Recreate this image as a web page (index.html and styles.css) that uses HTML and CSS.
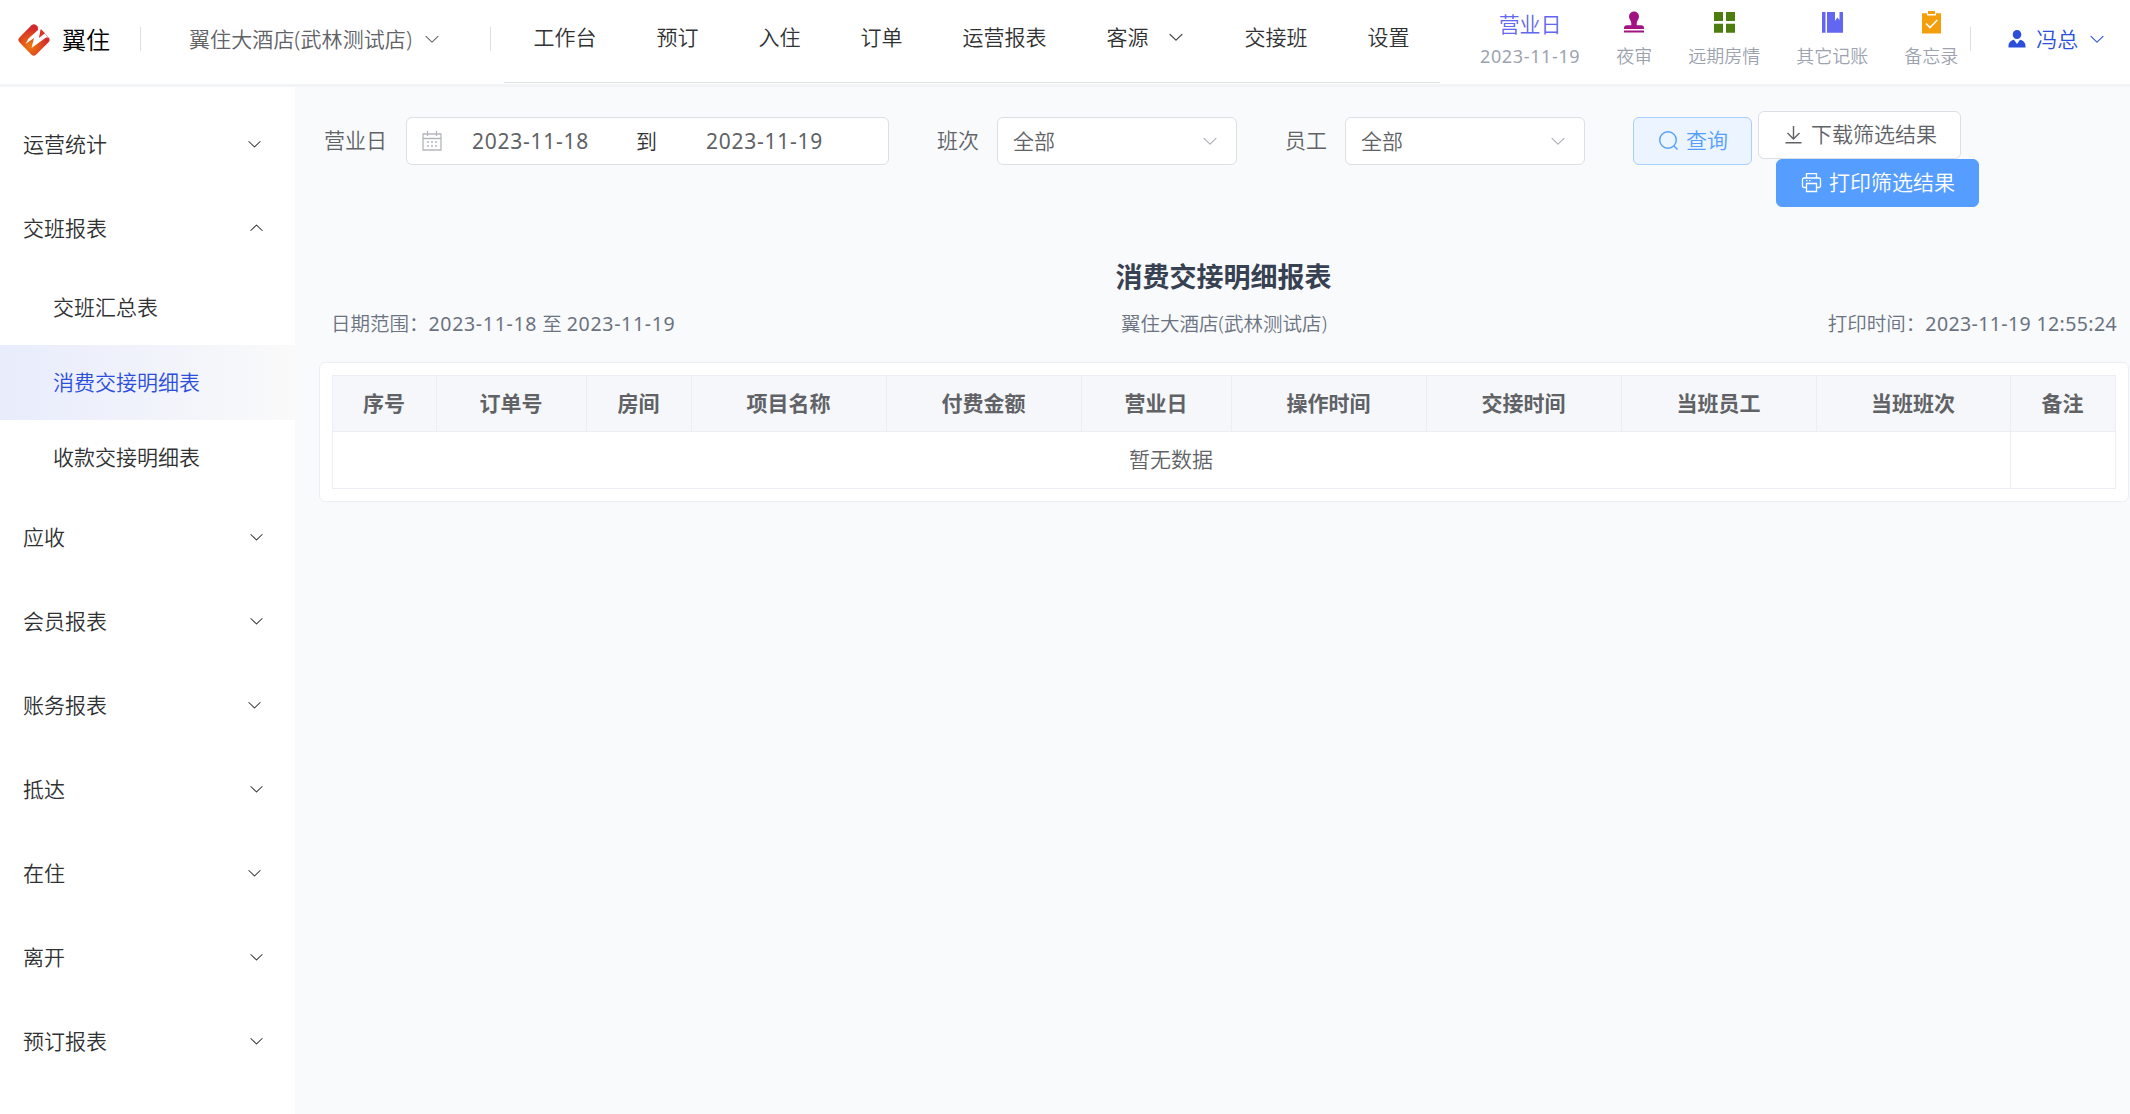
FILE: index.html
```html
<!DOCTYPE html>
<html lang="zh-CN">
<head>
  <meta charset="UTF-8">
  <meta name="viewport" content="width=device-width, initial-scale=1.0">
  <title>消费交接明细报表</title>
  <link rel="stylesheet" href="styles.css">
</head>
<body>
  <!-- shared icons -->
  <svg class="sprite" width="0" height="0">
    <symbol id="arrow" viewBox="0 0 1024 1024">
      <path d="M831.872 340.864 512 652.672 192.128 340.864a30.592 30.592 0 0 0-42.752 0 29.12 29.12 0 0 0 0 41.6L489.664 714.24a32 32 0 0 0 44.672 0l340.288-331.712a29.12 29.12 0 0 0 0-41.728 30.592 30.592 0 0 0-42.752 0z"/>
    </symbol>
  </svg>

  <header class="header">
    <div class="logo">
      <svg class="logo-img" viewBox="0 0 32 32">
        <defs>
          <radialGradient id="lg" gradientUnits="userSpaceOnUse" cx="12" cy="22" r="18">
            <stop offset="0" stop-color="#ee7a0c"/>
            <stop offset="1" stop-color="#d32a2b"/>
          </radialGradient>
        </defs>
        <path fill="url(#lg)" d="M13.500 1.200Q15.700-.6 18 1L20.500 3.200 30.800 13.700Q32.500 15.800 30.800 18L18 30.800Q15.800 32.500 13.500 30.800L1.200 18Q-.5 15.800 1.200 13.700z"/>
        <path fill="#fff" d="M19.800 2.300 23 5.300 21.500 12 26 8.500 29 12.500 31 13.500 28 13.500 13.500 24 16 14 7.500 20 10.500 14.500 20 6z"/>
        <path fill="#d9352a" d="M22.800 5 27 9.200 21 14z"/>
      </svg>
      <span>翼住</span>
    </div>
    <i class="divider"></i>
    <div class="hotel">翼住大酒店(武林测试店)<svg class="icon"><use href="#arrow"/></svg></div>
    <i class="divider"></i>
    <nav class="nav">
      <a>工作台</a>
      <a>预订</a>
      <a>入住</a>
      <a>订单</a>
      <a>运营报表</a>
      <a>客源<svg class="icon"><use href="#arrow"/></svg></a>
      <a>交接班</a>
      <a>设置</a>
    </nav>
    <div class="tools">
      <div class="tool">
        <b class="biz">营业日</b>
        <span class="num">2023-11-19</span>
      </div>
      <div class="tool">
        <svg viewBox="0 0 24 24" fill="#a21281"><path d="M12 1.500a5 5 0 0 1 5 5c0 3-2.300 4-2.300 7v1.800H19a3 3 0 0 1 3 3v.7H2v-.7a3 3 0 0 1 3-3h4.300v-1.800c0-3-2.300-4-2.300-7a5 5 0 0 1 5-5zM2 20.600h20v2H2z"/></svg>
        <span>夜审</span>
      </div>
      <div class="tool">
        <svg viewBox="0 0 24 24" fill="#4d7c0f"><path d="M2 2h9v9H2zM14 2h9v9h-9zM2 13.700h9v9H2zM14 13.700h9v9h-9z"/></svg>
        <span>远期房情</span>
      </div>
      <div class="tool">
        <svg viewBox="0 0 24 24" fill="#6366f1"><path d="M2 2h3.500v20.700H2zM7 2h8v9l2.300-3.500 2.200 2.500V2H23v20.700H7z"/></svg>
        <span>其它记账</span>
      </div>
      <div class="tool">
        <svg viewBox="0 0 24 24"><path fill="#f59e0b" d="M3 3.200h5V5.500h9V3.200h5V23.500H3zM9 1h7v3H9z"/><path fill="none" stroke="#fff" stroke-width="1.600" d="m7 13.500 4 4 7.300-7.500"/></svg>
        <span>备忘录</span>
      </div>
    </div>
    <i class="divider divider-user"></i>
    <div class="user">
      <svg class="user-img" viewBox="0 0 18 18"><path fill="#2b4edb" d="M9 0a4.300 4.500 0 0 1 4.300 4.500C13.300 7 11.500 9 9 9S4.700 7 4.700 4.500A4.300 4.500 0 0 1 9 0zM.5 17.500v-1.500C.5 12.500 3 10.500 6 9.800L9 14l3-4.200c3 .7 5.500 2.700 5.500 6.200v1.500z"/></svg>
      冯总
      <svg class="icon"><use href="#arrow"/></svg>
    </div>
  </header>

  <div class="container">
    <aside class="sidebar">
      <div class="menu-item short">运营统计<svg class="icon"><use href="#arrow"/></svg></div>
      <div class="menu-item open">交班报表<svg class="icon"><use href="#arrow"/></svg></div>
      <div class="sub-item">交班汇总表</div>
      <div class="sub-item active">消费交接明细表</div>
      <div class="sub-item">收款交接明细表</div>
      <div class="menu-item">应收<svg class="icon"><use href="#arrow"/></svg></div>
      <div class="menu-item">会员报表<svg class="icon"><use href="#arrow"/></svg></div>
      <div class="menu-item short">账务报表<svg class="icon"><use href="#arrow"/></svg></div>
      <div class="menu-item">抵达<svg class="icon"><use href="#arrow"/></svg></div>
      <div class="menu-item short">在住<svg class="icon"><use href="#arrow"/></svg></div>
      <div class="menu-item">离开<svg class="icon"><use href="#arrow"/></svg></div>
      <div class="menu-item">预订报表<svg class="icon"><use href="#arrow"/></svg></div>
    </aside>

    <main class="main">
      <div class="filters">
        <label>营业日</label>
        <div class="date-range">
          <svg class="calendar" viewBox="0 0 20 20" fill="none" stroke="#b4b7be" stroke-width="1.300"><path d="M1 3h18v16H1zM1 7.500h18M5.500 0v5M14.500 0v5"/><path stroke-width="1.600" d="M5 11h2M9 11h2M13 11h2M5 15h2M9 15h2M13 15h2"/></svg>
          <span class="num">2023-11-18</span>
          <em>到</em>
          <span class="num">2023-11-19</span>
        </div>
        <label>班次</label>
        <div class="select">全部<svg class="icon"><use href="#arrow"/></svg></div>
        <label>员工</label>
        <div class="select">全部<svg class="icon"><use href="#arrow"/></svg></div>
        <button class="btn btn-query">
          <svg viewBox="0 0 21 21" fill="none" stroke="currentColor" stroke-width="1.400"><circle cx="10" cy="10" r="8.300"/><path d="m16 16 3.500 3.500"/></svg>查询
        </button>
        <div class="export">
          <button class="btn">
            <svg viewBox="0 0 21 21" fill="none" stroke="currentColor" stroke-width="1.400"><path d="M10.500 2v13M4.500 9l6 6 6-6M2.500 18.700h16"/></svg>下载筛选结果
          </button>
          <button class="btn btn-print">
            <svg viewBox="0 0 21 21" fill="none" stroke="currentColor" stroke-width="1.300"><path d="M5.500 6V1.700h10V6M5.500 15.500H3a1.500 1.500 0 0 1-1.500-1.500V7.500A1.500 1.500 0 0 1 3 6h15a1.500 1.500 0 0 1 1.500 1.500V14a1.500 1.500 0 0 1-1.500 1.500h-2.500M5.500 11.500h10v8h-10zM5 8.700h1.500M8 8.700h1.500"/></svg>打印筛选结果
          </button>
        </div>
      </div>

      <h1 class="title">消费交接明细报表</h1>
      <div class="info">
        <span>日期范围：<span class="num">2023-11-18</span> 至 <span class="num">2023-11-19</span></span>
        <span>翼住大酒店(武林测试店)</span>
        <span>打印时间：<span class="num num-time">2023-11-19 12:55:24</span></span>
      </div>

      <div class="card">
        <table class="table">
          <colgroup>
            <col class="w104"><col class="w150"><col class="w105"><col class="w195"><col class="w195"><col class="w150">
            <col class="w195"><col class="w195"><col class="w195"><col class="w194"><col>
          </colgroup>
          <thead>
            <tr>
              <th>序号</th>
              <th>订单号</th>
              <th>房间</th>
              <th>项目名称</th>
              <th>付费金额</th>
              <th>营业日</th>
              <th>操作时间</th>
              <th>交接时间</th>
              <th>当班员工</th>
              <th>当班班次</th>
              <th>备注</th>
            </tr>
          </thead>
          <tbody>
            <tr>
              <td colspan="10">暂无数据</td>
              <td></td>
            </tr>
          </tbody>
        </table>
      </div>
    </main>
  </div>
</body>
</html>
```

FILE: styles.css
```css
* {
  box-sizing: border-box;
}

body {
  margin: 0;
  height: 1114px;
  overflow: hidden;
  background: #f8fafc;
  color: #606266;
  font-family: "Noto Sans", "Noto Sans CJK SC", sans-serif;
  font-size: 21px;
  font-weight: 350;
  line-height: 30px;
}

.sprite {
  display: block;
}

.icon {
  width: 18px;
  height: 18px;
  fill: currentColor;
  flex: none;
}

.num {
  font-weight: 400;
  letter-spacing: 0.035em;
  white-space: nowrap;
}

.num-time {
  letter-spacing: 0.02em;
}

/* header */
.header {
  display: flex;
  align-items: flex-start;
  height: 87px;
  background: #fff;
  border-bottom: 3px solid #f3f4f6;
}

.logo {
  display: flex;
  align-items: center;
  gap: 12px;
  width: 140px;
  padding: 24px 0 0 18px;
  color: #000;
  font-size: 24px;
  line-height: 32px;
}

.logo-img {
  width: 32px;
  height: 32px;
}

.divider {
  width: 1px;
  height: 24px;
  margin-top: 27px;
  background: #dcdfe6;
}

.hotel {
  display: flex;
  align-items: center;
  gap: 11px;
  width: 349px;
  padding: 24px 0 0 48px;
  letter-spacing: 0.1px;
  white-space: nowrap;
}

.nav {
  display: flex;
  width: 936px;
  height: 83px;
  margin-left: 13px;
  border-bottom: 1px solid #dcdfe6;
  color: #303133;
}

.nav a {
  display: flex;
  align-items: center;
  height: 74px;
  padding: 0 30.500px 0 29.500px;
}

.nav .icon {
  margin-left: 18px;
}

.tools {
  display: flex;
  gap: 36px;
  margin-left: 40px;
  padding-top: 9px;
  color: #9ca3af;
  font-size: 18px;
}

.tool {
  display: flex;
  flex-direction: column;
  align-items: center;
}

.tool svg {
  width: 24px;
  height: 24px;
  margin: 1px 0 7px;
}

.biz {
  margin-bottom: 2px;
  color: #6366f1;
  font-size: 21px;
  font-weight: 350;
}

.divider-user {
  margin-left: 12px;
}

.user {
  display: flex;
  align-items: center;
  gap: 10px;
  padding: 24px 0 0 37px;
  color: #2b4edb;
}

.user-img {
  width: 18px;
  height: 18px;
}

/* left menu */
.container {
  display: flex;
  height: 1027px;
}

.sidebar {
  flex: none;
  width: 295px;
  padding-top: 15px;
  background: #fff;
  color: #303133;
}

.menu-item {
  display: flex;
  align-items: center;
  justify-content: space-between;
  height: 84px;
  padding: 0 30px 0 23px;
}

.menu-item .icon {
  width: 17px;
}

.short .icon {
  margin-right: 2px;
}

.open .icon {
  transform: rotate(180deg);
}

.sub-item {
  height: 75px;
  padding-left: 53px;
  line-height: 75px;
}

.sub-item.active {
  background: linear-gradient(to right, #e8ecfc, #fafafa);
  color: #2b4edb;
}

/* report */
.main {
  flex: 1;
  padding: 24px 1px 0 24px;
}

.filters {
  display: flex;
  align-items: flex-start;
  height: 96px;
  padding-left: 5px;
}

.filters label {
  margin-right: 18px;
  line-height: 59px;
}

.filters label:first-child {
  margin-right: 19px;
}

.date-range,
.select {
  display: flex;
  align-items: center;
  height: 48px;
  margin: 6px 48px 0 0;
  padding-bottom: 1px;
  border: 1px solid #dcdfe6;
  border-radius: 6px;
  background: #fff;
}

.date-range {
  width: 483px;
  padding-left: 15px;
}

.date-range .num {
  width: 116px;
}

.date-range em {
  margin: 0 49px 0 48px;
  color: #303133;
  font-style: normal;
}

.calendar {
  width: 20px;
  height: 20px;
  margin-right: 30px;
}

.select {
  justify-content: space-between;
  width: 240px;
  padding: 0 17px 1px 15px;
}

.select .icon {
  color: #a8abb2;
}

.btn {
  display: flex;
  align-items: center;
  gap: 7px;
  width: 203px;
  height: 48px;
  padding: 0 0 2px 24px;
  border: 1px solid #dcdfe6;
  border-radius: 6px;
  background: #fff;
  color: #606266;
  font: inherit;
  white-space: nowrap;
}

.btn svg {
  width: 21px;
  height: 21px;
}

.btn-query {
  width: 119px;
  margin: 6px 6px 0 0;
  border-color: #a8cfff;
  background: #ecf5ff;
  color: #559eff;
}

.btn-print {
  margin-left: 18px;
  border-color: #559eff;
  background: #559eff;
  color: #fff;
}

.title {
  margin: 50px 0 0;
  padding-right: 1px;
  color: #374151;
  font-size: 27px;
  font-weight: 700;
  line-height: 40px;
  text-align: center;
}

.info {
  display: grid;
  grid-template-columns: 1fr auto 1fr;
  height: 30px;
  margin: 12px 12px 0 12px;
  color: #6b7280;
  font-size: 19.5px;
}

.info > :last-child {
  text-align: right;
}

.card {
  margin-top: 23px;
  padding: 12px;
  border: 1px solid #ebeef5;
  border-radius: 6px;
  background: #fff;
}

.table {
  width: 100%;
  border-collapse: collapse;
  table-layout: fixed;
}

.table th,
.table td {
  height: 57px;
  padding: 0 1px 2px 0;
  border: 1px solid #ebeef5;
  text-align: center;
}

.table th {
  height: 56px;
  background: #f5f7fa;
  font-weight: 700;
}

.w104 {
  width: 104px;
}

.w105 {
  width: 105px;
}

.w150 {
  width: 150px;
}

.w194 {
  width: 194px;
}

.w195 {
  width: 195px;
}
```
